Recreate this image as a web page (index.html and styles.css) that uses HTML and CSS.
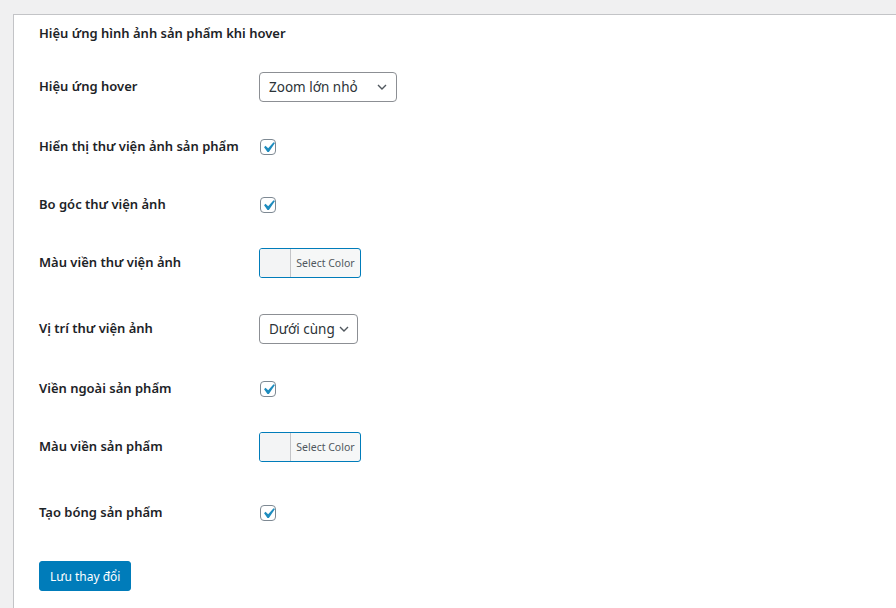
FILE: index.html
```html
<!DOCTYPE html>
<html lang="vi">
<head>
<meta charset="utf-8">
<title>Hiệu ứng hình ảnh sản phẩm khi hover</title>
<link rel="stylesheet" href="styles.css">
</head>
<body>
<div class="panel">
  <h2 class="title">Hiệu ứng hình ảnh sản phẩm khi hover</h2>
  <div class="form">
    <div class="row">
      <div class="label">Hiệu ứng hover</div>
      <div class="control">
        <div class="select select-wide"><span>Zoom lớn nhỏ</span><svg class="chev" width="10" height="6" viewBox="0 0 10 6"><path d="M1 1l4 4 4-4" fill="none" stroke="#50575e" stroke-width="1.4"/></svg></div>
      </div>
    </div>
    <div class="row">
      <div class="label">Hiển thị thư viện ảnh sản phẩm</div>
      <div class="control control-check"><span class="check"><svg width="21" height="21" viewBox="0 0 20 20"><path d="M14.83 4.89l1.34.94-5.81 8.38H9.02L5.78 9.67l1.34-1.25 2.57 2.4z" fill="#1e8cbe"/></svg></span></div>
    </div>
    <div class="row">
      <div class="label">Bo góc thư viện ảnh</div>
      <div class="control control-check"><span class="check"><svg width="21" height="21" viewBox="0 0 20 20"><path d="M14.83 4.89l1.34.94-5.81 8.38H9.02L5.78 9.67l1.34-1.25 2.57 2.4z" fill="#1e8cbe"/></svg></span></div>
    </div>
    <div class="row">
      <div class="label">Màu viền thư viện ảnh</div>
      <div class="control">
        <div class="color-btn"><span class="swatch"></span><span class="color-text">Select Color</span></div>
      </div>
    </div>
    <div class="row">
      <div class="label">Vị trí thư viện ảnh</div>
      <div class="control">
        <div class="select select-narrow"><span>Dưới cùng</span><svg class="chev" width="10" height="6" viewBox="0 0 10 6"><path d="M1 1l4 4 4-4" fill="none" stroke="#50575e" stroke-width="1.4"/></svg></div>
      </div>
    </div>
    <div class="row">
      <div class="label">Viền ngoài sản phẩm</div>
      <div class="control control-check"><span class="check"><svg width="21" height="21" viewBox="0 0 20 20"><path d="M14.83 4.89l1.34.94-5.81 8.38H9.02L5.78 9.67l1.34-1.25 2.57 2.4z" fill="#1e8cbe"/></svg></span></div>
    </div>
    <div class="row">
      <div class="label">Màu viền sản phẩm</div>
      <div class="control">
        <div class="color-btn"><span class="swatch"></span><span class="color-text">Select Color</span></div>
      </div>
    </div>
    <div class="row">
      <div class="label">Tạo bóng sản phẩm</div>
      <div class="control control-check"><span class="check"><svg width="21" height="21" viewBox="0 0 20 20"><path d="M14.83 4.89l1.34.94-5.81 8.38H9.02L5.78 9.67l1.34-1.25 2.57 2.4z" fill="#1e8cbe"/></svg></span></div>
    </div>
  </div>
  <div class="submit"><button class="btn-primary" type="button">Lưu thay đổi</button></div>
</div>
</body>
</html>
```
FILE: styles.css
```css
html, body {
  margin: 0;
  padding: 0;
  height: 100%;
}
body {
  background: #f0f0f1;
  padding: 14px 0 0 13px;
  box-sizing: border-box;
  font-family: "Noto Sans", "Open Sans", sans-serif;
  color: #1d2327;
  font-size: 14px;
  overflow: hidden;
}
.panel {
  background: #fff;
  border-top: 1px solid #c3c4c7;
  border-left: 1px solid #c3c4c7;
  padding: 9px 0 0 25px;
  height: 100%;
  box-sizing: border-box;
}
.title {
  margin: 0 0 15px;
  font-size: 13px;
  font-weight: 600;
  line-height: 18px;
}
.row {
  display: flex;
}
.label {
  width: 220px;
  padding: 20px 0;
  line-height: 18px;
  font-size: 13px;
  font-weight: 600;
}
.control {
  padding: 15px 0;
}
.control-check {
  padding-top: 22px;
}
.select {
  box-sizing: border-box;
  height: 30px;
  border: 1px solid #8c8f94;
  border-radius: 4px;
  display: flex;
  align-items: center;
  justify-content: space-between;
  padding: 0 9px 0 9px;
  font-size: 13.5px;
  color: #2c3338;
  background: #fff;
}
.select-wide { width: 138px; }
.select-narrow { width: 99px; padding-right: 8px; }
.chev { display: block; }
.check {
  box-sizing: border-box;
  display: flex;
  align-items: center;
  justify-content: center;
  width: 16px;
  height: 16px;
  margin-left: 1px;
  border: 1px solid #7e8993;
  border-radius: 4px;
  background: #fff;
}
.check svg {
  flex-shrink: 0;
  display: block;
}
.color-btn {
  box-sizing: border-box;
  display: flex;
  width: 102px;
  height: 30px;
  margin: 0 6px 6px 0;
  border: 1px solid #007cba;
  border-radius: 3px;
  background: #f6f7f7;
  overflow: hidden;
}
.swatch {
  width: 30px;
  border-right: 1px solid #c3c4c7;
  background: #f3f4f5;
}
.color-text {
  flex: 1;
  display: flex;
  align-items: center;
  justify-content: center;
  font-size: 10.5px;
  color: #50575e;
}
.submit {
  padding-top: 20px;
}
.btn-primary {
  height: 30px;
  padding: 0 10px;
  border: 1px solid #007cba;
  border-radius: 3px;
  background: #007cba;
  color: #fff;
  font-family: "Noto Sans", "Open Sans", sans-serif;
  font-size: 12px;
  cursor: pointer;
}
```
